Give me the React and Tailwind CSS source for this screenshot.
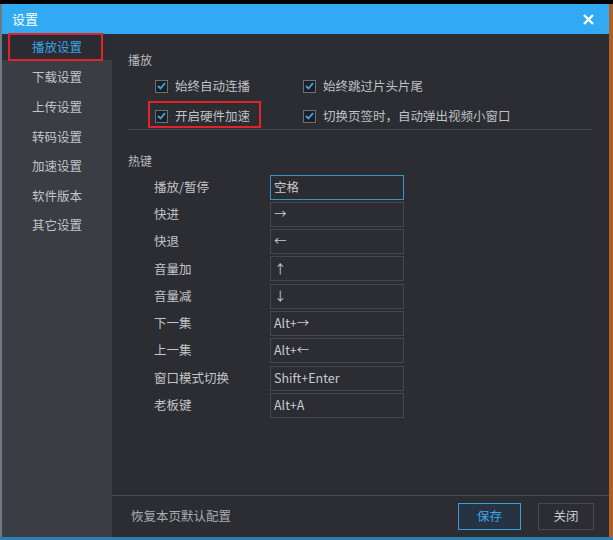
import React from 'react';

const font = { fontFamily: '"Noto Sans CJK SC", "Noto Sans", sans-serif' };

const menu = ['下载设置', '上传设置', '转码设置', '加速设置', '软件版本', '其它设置'];

const hotkeys = [
  ['播放/暂停', '空格'],
  ['快进', '→'],
  ['快退', '←'],
  ['音量加', '↑'],
  ['音量减', '↓'],
  ['下一集', 'Alt+→'],
  ['上一集', 'Alt+←'],
  ['窗口模式切换', 'Shift+Enter'],
  ['老板键', 'Alt+A'],
];

function Check({ label }) {
  return (
    <div className="flex items-center gap-[7px]">
      <span className="flex h-[13px] w-[13px] items-center justify-center border border-[#6b6f76] bg-[#1d1f23]">
        <svg width="9" height="8" viewBox="0 0 9 8">
          <path d="M1 4 L3.5 6.5 L8 1.2" fill="none" stroke="#3da4e8" strokeWidth="1.8" />
        </svg>
      </span>
      <span className="text-[12.5px] text-[#bfc1c4]">{label}</span>
    </div>
  );
}

export default function App() {
  return (
    <div className="flex h-[540px] w-[613px] flex-col bg-black" style={font}>
      <div className="flex h-[537px] pt-[4px]">
        {/* dialog */}
        <div className="flex w-[609px] flex-col border-l-2 border-[#6d7a84]">
          {/* title bar */}
          <div className="flex h-[30px] items-center justify-between bg-[#31aaf3] pl-[10px] pr-[15px]">
            <span className="text-[13px] text-white">设置</span>
            <svg width="11" height="11" viewBox="0 0 11 11">
              <path d="M1 1 L10 10 M10 1 L1 10" stroke="white" strokeWidth="2.4" />
            </svg>
          </div>

          <div className="flex flex-1">
            {/* sidebar */}
            <div className="w-[110px] bg-[#3a3d43]">
              <div className="relative flex h-[26px] items-center justify-center bg-[#2a2c31]">
                <span className="text-[12.5px] text-[#3ba3e6]">播放设置</span>
                <div className="absolute left-[6px] top-[-1px] h-[28px] w-[95px] border-2 border-[#e0242a]"></div>
              </div>
              <div className="pt-[3px]">
                {menu.map((m) => (
                  <div key={m} className="flex h-[29.6px] items-center justify-center text-[12.5px] text-[#c2c4c7]">
                    {m}
                  </div>
                ))}
              </div>
            </div>

            {/* content */}
            <div className="flex flex-1 flex-col bg-[#2b2d32]">
              <div className="flex-1 pl-[16px] pr-[16px] pt-[17px]">
                <div className="text-[12px] text-[#b8babd]">播放</div>
                <div className="mt-[8px] flex flex-col gap-[11px] pl-[27px]">
                  <div className="flex">
                    <div className="w-[148px]"><Check label="始终自动连播" /></div>
                    <Check label="始终跳过片头片尾" />
                  </div>
                  <div className="flex">
                    <div className="relative w-[148px]">
                      <Check label="开启硬件加速" />
                      <div className="absolute left-[-7px] top-[-6px] h-[27px] w-[113px] border-2 border-[#e0242a]"></div>
                    </div>
                    <Check label="切换页签时，自动弹出视频小窗口" />
                  </div>
                </div>
                <div className="mt-[3px] h-px w-[464px] bg-[#43464c]"></div>

                <div className="mt-[22px] text-[12px] text-[#b8babd]">热键</div>
                <div className="mt-[5px] flex flex-col gap-[2.3px] pl-[26px]">
                  {hotkeys.map(([name, key], i) => (
                    <div key={name} className="flex h-[25px] items-center">
                      <span className="w-[116px] text-[12.5px] text-[#c2c4c7]">{name}</span>
                      <div
                        className={`flex h-[25px] w-[134px] items-center border px-[3px] text-[12.5px] text-[#c8cacd] ${
                          i === 0 ? 'border-[#3596c6] bg-[#2a2c31]' : 'border-[#44474d] bg-[#2b2d32]'
                        }`}
                      >
                        {key}
                      </div>
                    </div>
                  ))}
                </div>
              </div>

              {/* footer */}
              <div className="flex h-[42px] items-center justify-between border-t border-[#494c52] pl-[19px] pr-[15px]">
                <span className="text-[12.5px] text-[#a9abae]">恢复本页默认配置</span>
                <div className="flex gap-[17px]">
                  <button className="h-[27px] w-[63px] border border-[#3a9fd6] bg-[#263342] text-[12.5px] text-[#3ea6ea]">
                    保存
                  </button>
                  <button className="h-[27px] w-[56px] border border-[#45484e] bg-[#2b2d32] text-[12.5px] text-[#c8cacd]">
                    关闭
                  </button>
                </div>
              </div>
            </div>
          </div>
        </div>
        <div className="w-[4px] bg-[#b25f24]"></div>
      </div>
      <div className="h-[3px] bg-[#2e7fae]"></div>
    </div>
  );
}
